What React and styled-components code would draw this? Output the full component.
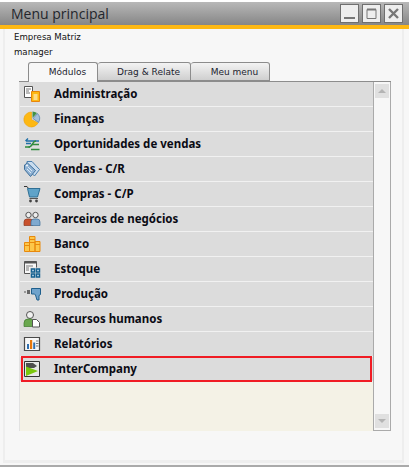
import React from "react";
import styled, { createGlobalStyle } from "styled-components";

const GlobalStyle = createGlobalStyle`
  html, body { margin: 0; padding: 0; background: #f7f7f7; }
  body { font-family: "DejaVu Sans", sans-serif; }
`;

const Window = styled.div`
  width: 409px;
  height: 467px;
  box-sizing: border-box;
  display: flex;
  flex-direction: column;
  overflow: hidden;
  border-bottom: 2px solid #aaaaaa;
`;

const TitleBar = styled.div`
  height: 25px;
  box-sizing: border-box;
  padding: 2px 6px 0 11px;
  display: flex;
  align-items: center;
  justify-content: space-between;
  background: linear-gradient(#ffffff 0, #ffffff 2px, #b8b8b8 2px, #868686 100%);
`;

const Title = styled.div`
  font-family: "Open Sans", sans-serif;
  font-size: 14px;
  color: #23262c;
`;

const WindowButtons = styled.div`
  display: flex;
  gap: 3px;
`;

const WindowButton = styled.div`
  width: 19px;
  height: 19px;
  box-sizing: border-box;
  border: 1px solid #6f6f6f;
  background: #eeeeee;
  display: flex;
  align-items: center;
  justify-content: center;
`;

const AccentBar = styled.div`
  height: 4px;
  background: #fdb813;
`;

const Body = styled.div`
  flex: 1;
  margin: 0 5px 2px 3px;
  padding: 0 13px 0 15px;
  border: solid #eeeeee;
  border-width: 0 2px 3px 2px;
  display: flex;
  flex-direction: column;
  background: #f7f7f7;
  min-height: 0;
`;

const InfoLine = styled.div`
  font-family: "DejaVu Sans", sans-serif;
  font-size: 8.6px;
  line-height: 15px;
  color: #111111;
  margin-left: -6px;
`;

const Info = styled.div`
  padding-top: 1px;
`;

const TabRow = styled.div`
  display: flex;
  height: 20px;
  margin-top: 2px;
  margin-left: 8px;
  position: relative;
  z-index: 1;
`;

const Tab = styled.div`
  box-sizing: border-box;
  width: ${({ $w }) => $w}px;
  height: ${({ $active }) => ($active ? 20 : 19)}px;
  padding-left: 9px;
  border: 1px solid #8c8c8c;
  border-left-width: ${({ $active }) => ($active ? 1 : 0)}px;
  border-bottom: ${({ $active }) => ($active ? "none" : "1px solid #8c8c8c")};
  border-radius: 3px 3px 0 0;
  background: ${({ $active }) =>
    $active ? "#f7f7f7" : "linear-gradient(#f3f3f3, #cfcfcf)"};
  font-size: 9px;
  line-height: 19px;
  text-align: center;
  color: #1c2430;
`;

const Panel = styled.div`
  height: 350px;
  display: flex;
  box-sizing: border-box;
  margin-top: -1px;
  margin-left: -1px;
  width: 372px;
  border-top: 1px solid #8c8c8c;
`;

const List = styled.div`
  flex: 1;
  display: flex;
  flex-direction: column;
  background: #f4f2e6;
  border-left: 1px solid #e2e2e2;
`;

const Row = styled.div`
  height: 25px;
  flex: none;
  box-sizing: border-box;
  position: relative;
  display: flex;
  align-items: center;
  padding: 0 0 1px 3px;
  gap: 13px;
  background: #dcdcdc;
  border-bottom: 1px solid #f1f1f1;
  ${({ $marked }) =>
    $marked &&
    `&::after {
      content: "";
      position: absolute;
      left: 1px;
      right: 1px;
      top: -1px;
      bottom: -1px;
      border: 2px solid #f01c24;
    }`}
`;

const RowLabel = styled.span`
  font-family: "Noto Sans", sans-serif;
  font-weight: 700;
  font-size: 11.5px;
  color: #0b0b14;
`;

const Scrollbar = styled.div`
  width: 18px;
  flex: none;
  box-sizing: border-box;
  border: solid #aaaaaa;
  border-width: 0 1px 1px 1px;
  background: #f7f7f7;
  display: flex;
  flex-direction: column;
  justify-content: space-between;
  padding: 2px 1px;
`;

const ScrollButton = styled.div`
  height: 14px;
  background: #e0e0e0;
  display: flex;
  align-items: center;
  justify-content: center;
`;

const Arrow = styled.div`
  width: 0;
  height: 0;
  border-left: 4px solid transparent;
  border-right: 4px solid transparent;
  border-${({ $down }) => ($down ? "top" : "bottom")}: 4px solid #b4b4b4;
`;

const Icon = ({ children }) => (
  <svg width="18" height="18" viewBox="0 0 18 18">
    {children}
  </svg>
);

const icons = {
  admin: (
    <Icon>
      <path d="M1.5 1.5h8v11h-8z" fill="#fff" stroke="#555" />
      <path d="M3 4h5M3 6h3M3 8h4" stroke="#777" />
      <path d="M8.5 6.5h8v10h-8z" fill="#fdb813" stroke="#e8850c" />
      <path d="M10.5 10h4M10.5 12h4M10.5 14h4" stroke="#fff" />
    </Icon>
  ),
  finance: (
    <Icon>
      <path d="M8.5 9.500V2a7.500 7.500 0 1 0 6.500 11z" fill="#fdb813" stroke="#ee9f00" strokeWidth="0.6" />
      <path d="M9.500 8V1.500a7.500 7.500 0 0 1 4.500 1.600z" fill="#3f9148" />
      <path d="M10 8.500l4.500-5a7.500 7.500 0 0 1 1 9z" fill="#a3c0da" stroke="#4f7ba3" strokeWidth="0.7" />
    </Icon>
  ),
  sales: (
    <Icon>
      <path d="M3 6h13M5 3.500L2.500 6M3 8.500h5" fill="none" stroke="#1f6fa8" strokeWidth="1.400" />
      <path d="M13 6C9 6 10 12 5.500 12" fill="none" stroke="#2f8a3c" strokeWidth="1.500" />
      <path d="M9 9.500h7M2 12h5M8 14.500h8.500" fill="none" stroke="#2f8a3c" strokeWidth="1.400" />
    </Icon>
  ),
  tag: (
    <Icon>
      <path d="M4 1.5h5l7.5 8-5 6.5-8-8z" fill="#c9dcee" stroke="#4a7fae" />
      <path d="M1.5 5l3-2 8 7.5-5 6-6-7z" fill="#8fb2d4" stroke="#3f6f9a" />
      <path d="M5 7l4 4M4 9l4 4" stroke="#dbe8f4" />
      <circle cx="4" cy="5.5" r="0.9" fill="#fff" />
    </Icon>
  ),
  cart: (
    <Icon>
      <path d="M1 1.5h3l1.5 2" fill="none" stroke="#333" />
      <path d="M4.5 3.5h12.5l-2.5 8.5h-8z" fill="#5fa3c9" stroke="#2f6f94" />
      <path d="M6.5 13.5h8.5" stroke="#555" />
      <circle cx="7.5" cy="16" r="1.4" fill="#444" />
      <circle cx="13.5" cy="16" r="1.4" fill="#444" />
    </Icon>
  ),
  partners: (
    <Icon>
      <circle cx="5.5" cy="5" r="2.7" fill="#eee" stroke="#555" />
      <circle cx="12.5" cy="5" r="2.7" fill="#eee" stroke="#555" />
      <path d="M1 15.5v-3.500q0-3 3-3h3q3 0 3 3v3.500z" fill="#c8502c" stroke="#8f3a20" strokeWidth="0.7" />
      <path d="M8 15.500v-3.500q0-3 3-3h3q3 0 3 3v3.500z" fill="#7fa9cf" stroke="#3e6f9a" strokeWidth="0.7" />
    </Icon>
  ),
  bank: (
    <Icon>
      <path d="M1.500 7.500h5v9h-5zM6.500 1.500h5.500v15H6.500zM12 6.500h5v10h-5z" fill="#fdc74a" stroke="#e8890c" />
      <path d="M6.500 4.500h5.500M6.500 7.500h5.500M1.500 10.500h5M12 9.500h5" stroke="#e8890c" />
    </Icon>
  ),
  stock: (
    <Icon>
      <path d="M1.500 1.500h12v12h-12z" fill="#f7f7f7" stroke="#555" />
      <path d="M1.500 2.500h12" stroke="#555" strokeWidth="2" />
      <path d="M3 6h7M3 8h3M3 10h3" stroke="#777" />
      <path d="M7 7.500h11V18H7z" fill="#dcdcdc" />
      <path d="M8.500 9h3v3h-3zM13.500 9h3v3h-3zM8.500 14h3v3h-3zM13.500 14h3v3h-3z" fill="#cfe2f2" stroke="#14608f" strokeWidth="1.500" />
    </Icon>
  ),
  production: (
    <Icon>
      <path d="M1 6h2v2H1z" fill="#999" />
      <path d="M4 5h3v4H4z" fill="#666" />
      <path d="M8.500 3.500h9v6l-1.500 1v4.500h-2l-1.500-5-1-1H8.500z" fill="#6fa3cc" stroke="#1f5f8c" />
    </Icon>
  ),
  hr: (
    <Icon>
      <circle cx="7" cy="5" r="3.500" fill="#f1f1f1" stroke="#555" />
      <path d="M1 16.500v-3.500q0-4 4-4h3q2 0 2 3v4.500z" fill="#6aa84f" stroke="#3f7a2e" strokeWidth="0.7" />
      <path d="M9.500 9.500h4l3 3v4.500h-7z" fill="#fff" stroke="#555" />
    </Icon>
  ),
  reports: (
    <Icon>
      <path d="M1.500 2.500h15v13h-15z" fill="#f7f7f7" stroke="#4a4a4a" strokeWidth="1.200" />
      <path d="M4 9h2v5H4z" fill="#2f6fb0" />
      <path d="M7 5h2.200v9H7z" fill="#e8780c" />
      <path d="M10.200 7.500h2v6.500h-2z" fill="#2f6fb0" />
      <path d="M13 6h2.500M13 8.500h2.500M13 11h2.500" stroke="#777" />
    </Icon>
  ),
  inter: (
    <Icon>
      <path d="M1.500 1.500h15v15h-15z" fill="#e8e8e8" stroke="#333" />
      <path d="M3 3h7l4 3-3 2H3z" fill="#4f4f4f" />
      <path d="M3 6.500l12 4.500-12 5z" fill="#7ac70c" />
    </Icon>
  ),
};

const modules = [
  ["admin", "Administração"],
  ["finance", "Finanças"],
  ["sales", "Oportunidades de vendas"],
  ["tag", "Vendas - C/R"],
  ["cart", "Compras - C/P"],
  ["partners", "Parceiros de negócios"],
  ["bank", "Banco"],
  ["stock", "Estoque"],
  ["production", "Produção"],
  ["hr", "Recursos humanos"],
  ["reports", "Relatórios"],
  ["inter", "InterCompany"],
];

export default function App() {
  return (
    <>
      <GlobalStyle />
      <Window>
        <TitleBar>
          <Title>Menu principal</Title>
          <WindowButtons>
            <WindowButton>
              <svg width="13" height="13" viewBox="0 0 13 13">
                <path d="M1 11h11" stroke="#777" strokeWidth="2" />
              </svg>
            </WindowButton>
            <WindowButton>
              <svg width="13" height="13" viewBox="0 0 13 13">
                <path d="M2 2.500h9v9H2z" fill="none" stroke="#777" />
                <path d="M2 2.500h9" stroke="#777" strokeWidth="2" />
              </svg>
            </WindowButton>
            <WindowButton>
              <svg width="13" height="13" viewBox="0 0 13 13">
                <path d="M2 2l9 9M11 2l-9 9" stroke="#777" strokeWidth="2.400" />
              </svg>
            </WindowButton>
          </WindowButtons>
        </TitleBar>
        <AccentBar />
        <Body>
          <Info>
            <InfoLine>Empresa Matriz</InfoLine>
            <InfoLine>manager</InfoLine>
          </Info>
          <TabRow>
            <Tab $active $w={70}>Módulos</Tab>
            <Tab $w={93}>Drag &amp; Relate</Tab>
            <Tab $w={79}>Meu menu</Tab>
          </TabRow>
          <Panel>
            <List>
              {modules.map(([icon, label]) => (
                <Row key={label} $marked={label === "InterCompany"}>
                  {icons[icon]}
                  <RowLabel>{label}</RowLabel>
                </Row>
              ))}
            </List>
            <Scrollbar>
              <ScrollButton><Arrow /></ScrollButton>
              <ScrollButton><Arrow $down /></ScrollButton>
            </Scrollbar>
          </Panel>
        </Body>
      </Window>
    </>
  );
}
